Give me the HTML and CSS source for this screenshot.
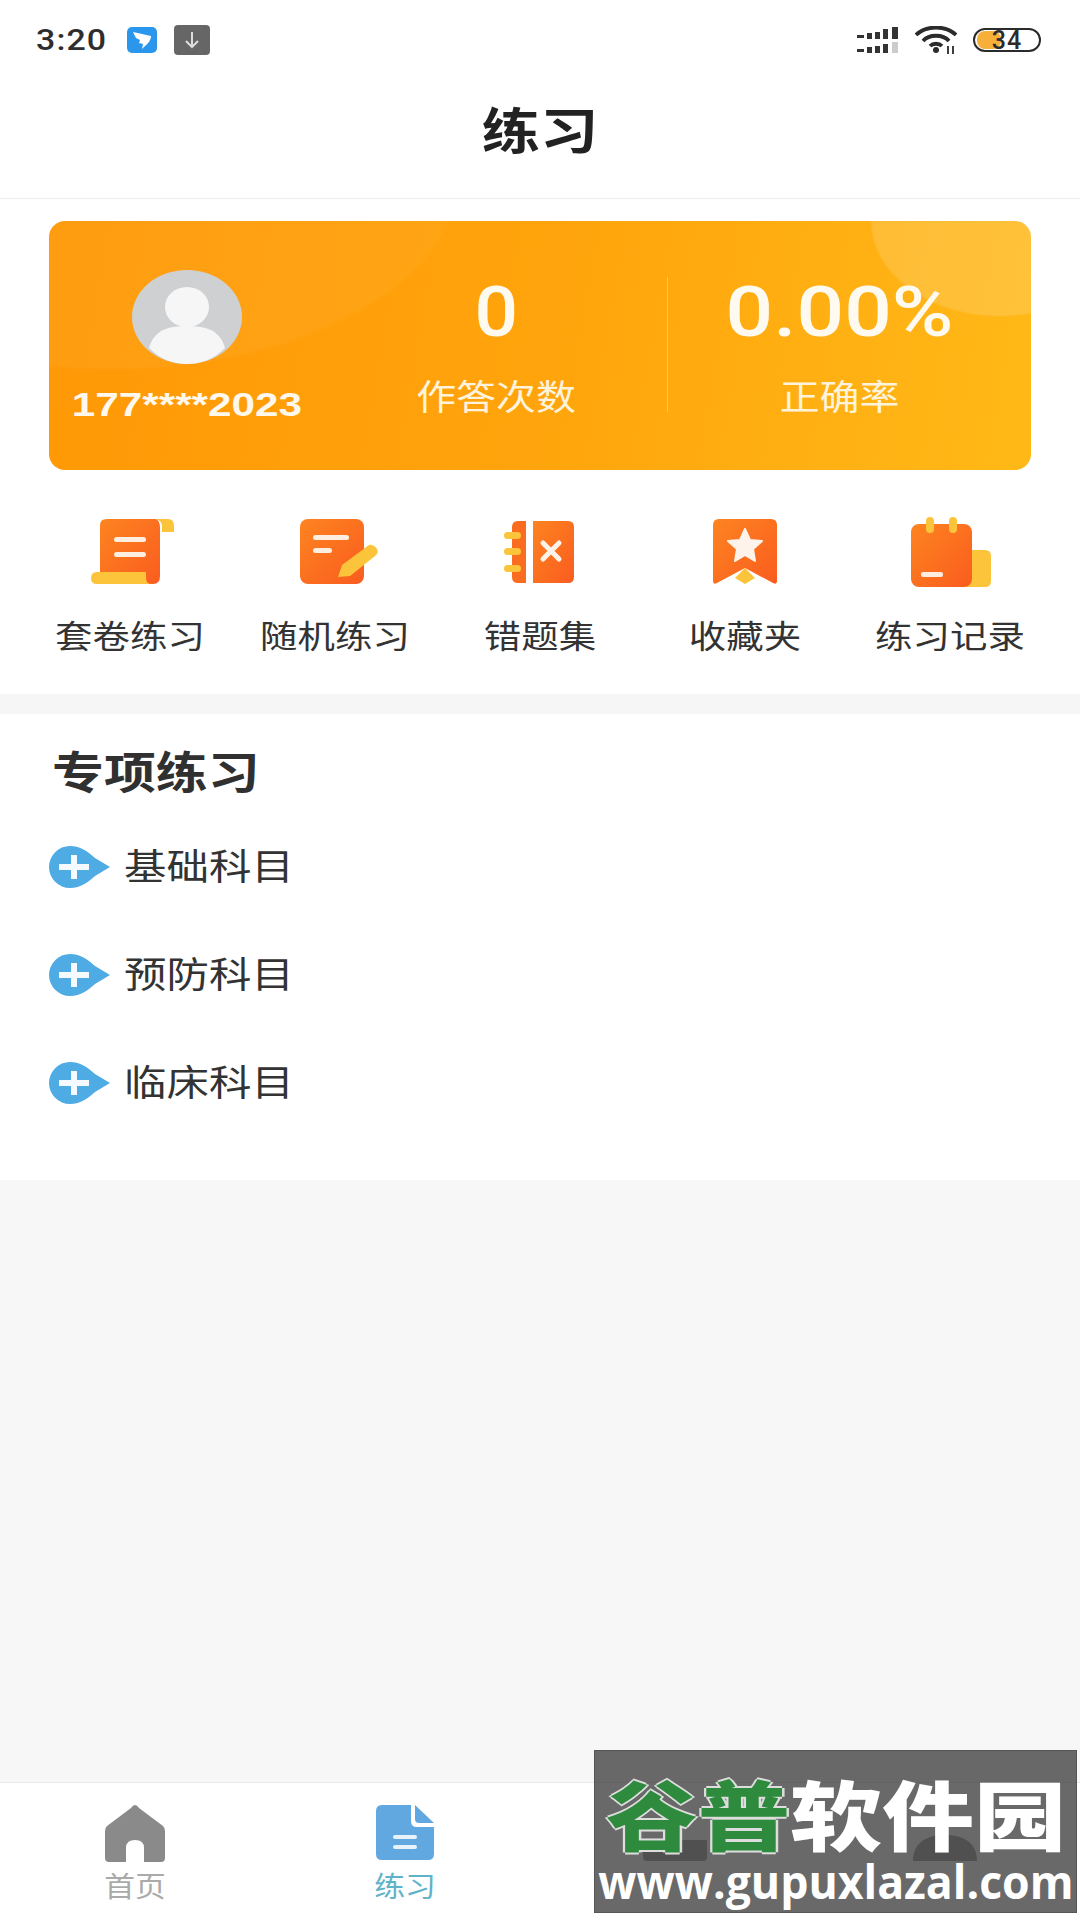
FILE: index.html
```html
<!DOCTYPE html>
<html lang="zh-CN">
<head>
<meta charset="utf-8">
<title>练习</title>
<link rel="stylesheet" href="styles.css">
</head>
<body>
<div class="page">
  <div class="status">
    <div class="status-left">
      <span class="time">3:20</span>
      <svg class="st-blue" width="30" height="26" viewBox="0 0 30 26"><rect width="30" height="26" rx="5" fill="#2a97ec"/><path d="M6 5 L24 9 C24 13 21 17 17 20 L15 22 L16 17 L12 16 L13 13 L9 11 Z" fill="#fff"/></svg>
      <svg class="st-gray" width="36" height="30" viewBox="0 0 36 30"><rect width="36" height="30" rx="4" fill="#666"/><path d="M18 7 V22 M12 16 L18 22 L24 16" stroke="#ddd" stroke-width="2" fill="none"/></svg>
    </div>
    <div class="status-right">
      <svg width="42" height="26" viewBox="0 0 42 26" fill="#333"><rect x="0" y="8" width="7" height="3"/><rect x="10" y="6" width="5" height="6"/><rect x="18" y="5" width="5" height="7"/><rect x="26" y="2" width="5" height="10"/><rect x="35" y="0" width="6" height="12"/><rect x="0" y="22" width="7" height="3"/><rect x="10" y="20" width="5" height="6"/><rect x="18" y="19" width="5" height="7"/><rect x="26" y="17" width="5" height="9"/><rect x="35" y="15" width="6" height="11" fill="#ccc"/></svg>
      <svg width="42" height="28" viewBox="0 0 42 28" fill="none" stroke="#2b2b2b" stroke-width="3.8"><path d="M1 9 C11 -1 31 -1 41 9"/><path d="M8 15 C14 8 28 8 34 15"/><path d="M15 20 C18 17 24 17 27 20"/><circle cx="21" cy="24" r="3" fill="#2b2b2b" stroke="none"/><path d="M33 20 V28 M38 20 V28" stroke-width="1.8"/></svg>
      <div class="battery"><span class="battery-fill"></span><span class="battery-num">34</span></div>
    </div>
  </div>

  <header class="header"><h1 class="title"><span class="wide-title">练习</span></h1></header>

  <section class="top">
    <div class="card">
      <div class="user">
        <svg class="avatar" width="110" height="94" viewBox="0 0 110 94"><ellipse cx="55" cy="47" rx="55" ry="47" fill="#cfd0d1"/><ellipse cx="55" cy="37" rx="22" ry="20" fill="#f6f6f6"/><path d="M17 78 C22 60 36 56 55 56 C74 56 88 60 93 78 C82 89 69 94 55 94 C41 94 28 89 17 78 Z" fill="#f6f6f6"/></svg>
        <div class="phone"><span class="wide-more">177****2023</span></div>
      </div>
      <div class="stat">
        <div class="num"><span class="wide-num">0</span></div>
        <div class="stat-label"><span class="wide">作答次数</span></div>
      </div>
      <div class="stat stat-divided">
        <div class="num"><span class="wide-rate">0.00%</span></div>
        <div class="stat-label"><span class="wide">正确率</span></div>
      </div>
    </div>

    <div class="tools">
      <div class="tool">
        <svg width="100" height="72" viewBox="0 0 100 72"><defs><linearGradient id="g" x1="0" y1="0" x2="1" y2="1"><stop offset="0" stop-color="#fd8420"/><stop offset="1" stop-color="#fa5c1f"/></linearGradient></defs>
          <path d="M76 3 H88 Q94 3 94 10 V16 H82 L82 10 Q82 5 76 3 Z" fill="#fbc43a"/>
          <path d="M27 3 H76 Q80 5 80 12 V60 Q80 68 73 68 H20 V9 Q20 3 27 3 Z" fill="url(#g)"/>
          <path d="M17 56 H66 V62 Q66 68 72 68 H17 Q11 68 11 62 Q11 56 17 56 Z" fill="#fbc43a"/>
          <rect x="34" y="21" width="32" height="5" rx="2.5" fill="#fdeee0"/><rect x="34" y="36" width="32" height="5" rx="2.5" fill="#fdeee0"/></svg>
        <div class="tool-label"><span class="wide-tool">套卷练习</span></div>
      </div>
      <div class="tool">
        <svg width="100" height="72" viewBox="0 0 100 72"><rect x="15" y="3" width="64" height="65" rx="8" fill="url(#g)"/><rect x="28" y="19" width="36" height="5" rx="2.5" fill="#fdeee0"/><rect x="28" y="32" width="19" height="5" rx="2.5" fill="#fdeee0"/><path d="M53 61 L57 49 L84 29 Q88 28 92 33 Q94 37 90 40 L65 60 Z" fill="#fbc43a"/></svg>
        <div class="tool-label"><span class="wide-tool">随机练习</span></div>
      </div>
      <div class="tool">
        <svg width="100" height="72" viewBox="0 0 100 72"><path d="M28 5 H36 V67 H28 Q22 67 22 61 V11 Q22 5 28 5 Z" fill="#fa6c20"/><path d="M43 5 H78 Q84 5 84 11 V61 Q84 67 78 67 H43 Z" fill="url(#g)"/><rect x="14" y="16" width="17" height="7" rx="3.5" fill="#fbc43a"/><rect x="14" y="32" width="17" height="7" rx="3.5" fill="#fbc43a"/><rect x="14" y="49" width="17" height="7" rx="3.5" fill="#fbc43a"/><path d="M53 27 L69 43 M69 27 L53 43" stroke="#fdf3ea" stroke-width="5" stroke-linecap="round"/></svg>
        <div class="tool-label"><span class="wide-tool">错题集</span></div>
      </div>
      <div class="tool">
        <svg width="100" height="72" viewBox="0 0 100 72"><path d="M50 52 L60 62 L50 68 L40 62 Z" fill="#fbc43a"/><path d="M24 3 H76 Q82 3 82 9 V65 Q82 69 78 67 L50 52 L22 67 Q18 69 18 65 V9 Q18 3 24 3 Z" fill="url(#g)"/><path d="M50 13 L55 24 L67 25 L58 33 L60 45 L50 39 L40 45 L42 33 L33 25 L45 24 Z" fill="#fdf3ea" stroke="#fdf3ea" stroke-width="2" stroke-linejoin="round"/></svg>
        <div class="tool-label"><span class="wide-tool">收藏夹</span></div>
      </div>
      <div class="tool">
        <svg width="100" height="72" viewBox="0 0 100 72"><path d="M66 34 H85 Q91 34 91 40 V65 Q91 71 85 71 H66 Z" fill="#fbc43a"/><rect x="11" y="8" width="61" height="63" rx="8" fill="url(#g)"/><rect x="26" y="1" width="8" height="16" rx="4" fill="#fbc43a"/><rect x="49" y="1" width="8" height="16" rx="4" fill="#fbc43a"/><rect x="21" y="56" width="22" height="5" rx="2" fill="#fdeee0"/></svg>
        <div class="tool-label"><span class="wide-tool">练习记录</span></div>
      </div>
    </div>
  </section>

  <div class="band"></div>

  <section class="special">
    <h2 class="special-title"><span class="wide-left">专项练习</span></h2>
    <div class="row">
      <svg width="61" height="42" viewBox="0 0 61 42"><path d="M21 0 C32 0 39 6 46 12 L61 21 L46 30 C39 36 32 42 21 42 A21 21 0 0 1 21 0 Z" fill="#4fabe4"/><path d="M25 9 V33 M10 21 H40" stroke="#f4fafd" stroke-width="6"/></svg>
      <span class="row-label"><span class="wide-left">基础科目</span></span>
    </div>
    <div class="row">
      <svg width="61" height="42" viewBox="0 0 61 42"><path d="M21 0 C32 0 39 6 46 12 L61 21 L46 30 C39 36 32 42 21 42 A21 21 0 0 1 21 0 Z" fill="#4fabe4"/><path d="M25 9 V33 M10 21 H40" stroke="#f4fafd" stroke-width="6"/></svg>
      <span class="row-label"><span class="wide-left">预防科目</span></span>
    </div>
    <div class="row">
      <svg width="61" height="42" viewBox="0 0 61 42"><path d="M21 0 C32 0 39 6 46 12 L61 21 L46 30 C39 36 32 42 21 42 A21 21 0 0 1 21 0 Z" fill="#4fabe4"/><path d="M25 9 V33 M10 21 H40" stroke="#f4fafd" stroke-width="6"/></svg>
      <span class="row-label"><span class="wide-left">临床科目</span></span>
    </div>
  </section>

  <main class="filler"></main>

  <nav class="nav">
    <div class="tab">
      <svg width="62" height="60" viewBox="0 0 62 60"><path d="M31 0 Q33 0 35 3 L59 21 Q61 23 61 26 V53 Q61 57 57 57 H40 V43 Q40 35 31 35 Q22 35 22 43 V57 H5 Q1 57 1 53 V26 Q1 23 3 21 L27 3 Q29 0 31 0 Z" fill="#8a8a8a"/></svg>
      <div class="tab-label"><span class="wide-tab">首页</span></div>
    </div>
    <div class="tab tab-active">
      <svg width="62" height="60" viewBox="0 0 62 60"><path d="M8 0 H37 V16 Q37 22 43 22 H60 V49 Q60 55 54 55 H8 Q2 55 2 49 V6 Q2 0 8 0 Z" fill="#62a8e0"/><path d="M41 0 L60 18 H45 Q41 18 41 14 Z" fill="#62a8e0"/><rect x="19" y="30" width="24" height="4" rx="2" fill="#e8f2fb"/><rect x="19" y="40" width="24" height="4" rx="2" fill="#e8f2fb"/></svg>
      <div class="tab-label"><span class="wide-tab">练习</span></div>
    </div>
    <div class="tab">
      <svg width="66" height="60" viewBox="0 0 66 60"><path d="M1 35 H65 V52 Q65 56 61 56 H5 Q1 56 1 52 Z" fill="#8a8a8a"/></svg>
    </div>
    <div class="tab">
      <svg width="66" height="60" viewBox="0 0 66 60"><path d="M1 56 C1 38 14 30 33 30 C52 30 65 38 65 56 Z" fill="#8a8a8a"/></svg>
    </div>
  </nav>

  <aside class="watermark">
    <div class="wm-brand"><span class="wide-brand"><span class="wm-green">谷普</span>软件园</span></div>
    <div class="wm-url"><span class="wide-url">www.gupuxlazal.com</span></div>
  </aside>
</div>
</body>
</html>
```

FILE: styles.css
```css
* { box-sizing: border-box; }
html, body { margin: 0; padding: 0; }
body {
  width: 1080px;
  height: 1920px;
  overflow: hidden;
  font-family: "Noto Sans CJK SC", "Liberation Sans", sans-serif;
  color: #333;
  background: #f7f7f7;
}
.page {
  position: relative;
  width: 1080px;
  height: 1920px;
  display: flex;
  flex-direction: column;
}
.wide, .wide-num, .wide-rate, .wide-more, .wide-tab, .wide-url, .wide-brand, .wide-tool, .wide-title { display: inline-block; white-space: nowrap; }
.wide { transform: scaleX(1.14); }
.wide-title { transform: scaleX(1.19); }
.wide-tool { transform: scaleX(1.17); }
.wide-left { display: inline-block; white-space: nowrap; transform: scaleX(1.18); transform-origin: left center; }
.wide-num { transform: scaleX(1.08); }
.wide-rate { transform: scaleX(1.18); }
.wide-more { transform: scaleX(1.28); }
.wide-tab { transform: scaleX(1.1); }
.wide-url { transform: scaleX(.97); }
.wide-brand { transform: scaleX(1.21); }

/* status bar */
.status {
  height: 66px;
  background: #fff;
  padding: 14px 39px 0 36px;
  display: flex;
  justify-content: space-between;
  align-items: center;
}
.status-left { display: flex; align-items: center; }
.time {
  display: inline-block;
  width: 72px;
  font: 500 30px/1 Roboto, sans-serif;
  letter-spacing: 1px;
  color: #2e2e2e;
  transform: scaleX(1.13);
  transform-origin: left center;
}
.st-blue { margin-left: 19px; }
.st-gray { margin-left: 17px; }
.status-right { display: flex; align-items: center; gap: 16px; }
.battery {
  position: relative;
  width: 68px;
  height: 24px;
  border: 2.5px solid #2b2b2b;
  border-radius: 12px;
  display: flex;
  align-items: center;
  justify-content: center;
}
.battery-fill {
  position: absolute;
  left: 2px;
  top: 1px;
  bottom: 1px;
  width: 24px;
  border-radius: 8px;
  background: #f6b03a;
}
.battery-num {
  position: relative;
  font: 500 25px/1 Roboto, sans-serif;
  color: #2b2b2b;
  letter-spacing: 1px;
}

/* header */
.header {
  height: 133px;
  background: #fff;
  border-bottom: 1px solid #ececec;
  display: flex;
  align-items: center;
  justify-content: center;
  padding-bottom: 8px;
}
.title {
  margin: 0;
  font-size: 49px;
  line-height: 60px;
  font-weight: 700;
  color: #222;
}

/* top */
.top { background: #fff; padding: 22px 0 40px; }
.card {
  margin: 0 49px;
  height: 249px;
  border-radius: 16px;
  padding-right: 18px;
  display: grid;
  grid-template-columns: 276px 342px 346px;
  color: #fff;
  background:
    radial-gradient(ellipse 130px 96px at 951px 0, rgba(255,255,255,.15) 98%, transparent 100%),
    radial-gradient(ellipse 350px 190px at 60px -40px, rgba(255,255,255,.04) 98%, transparent 100%),
    linear-gradient(100deg, #ff9806 0%, #ffa40c 50%, #ffb917 100%);
}
.user { display: flex; flex-direction: column; align-items: center; padding-top: 49px; }
.phone { margin-top: 21px; font: 700 33px/40px "Liberation Sans", sans-serif; color: #fff8ec; }
.stat { display: flex; flex-direction: column; align-items: center; padding-top: 51px; }
.stat-divided { position: relative; }
.stat-divided::before {
  content: "";
  position: absolute;
  left: 0;
  top: 56px;
  height: 135px;
  width: 1px;
  background: rgba(255,255,255,.3);
}
.num { font: 500 71px/80px Roboto, sans-serif; color: #fffaf0; }
.stat-label { margin-top: 20px; font-size: 35px; line-height: 46px; color: #fff3dc; }

.tools {
  margin-top: 46px;
  padding: 0 27px;
  display: grid;
  grid-template-columns: repeat(5, 1fr);
}
.tool { display: flex; flex-direction: column; align-items: center; }
.tool-label { margin-top: 26px; font-size: 32px; line-height: 40px; color: #333; }

.band { height: 20px; background: #f6f6f6; }

/* special */
.special { background: #fff; height: 466px; padding: 26px 49px 0; }
.special-title { margin: 0 0 13px 3px; font-size: 44px; line-height: 60px; font-weight: 700; color: #303030; }
.row { height: 108px; display: flex; align-items: center; gap: 14px; }
.row-label { font-size: 36px; line-height: 48px; padding-bottom: 7px; color: #333; }

.filler { flex: 1; background: #f7f7f7; }

/* nav */
.nav {
  height: 138px;
  background: #fff;
  border-top: 1px solid #e8e8e8;
  padding-top: 22px;
  display: grid;
  grid-template-columns: repeat(4, 270px);
}
.tab { display: flex; flex-direction: column; align-items: center; }
.tab-label { margin-top: 2px; font-size: 28px; line-height: 36px; color: #aaa; }
.tab-active .tab-label { color: #5fb3c9; }

/* watermark */
.watermark {
  position: absolute;
  left: 594px;
  top: 1750px;
  width: 483px;
  height: 163px;
  background: rgba(65,65,65,.79);
  border: 1px solid #555;
  display: flex;
  flex-direction: column;
  align-items: center;
  overflow: hidden;
}
.wm-brand {
  margin-top: 20px;
  font-size: 76px;
  line-height: 82px;
  font-weight: 900;
  color: #fff;
}
.wm-green {
  color: #2e8b3d;
  text-shadow: 2px 0 0 #ddd, -2px 0 0 #ddd, 0 2px 0 #ddd, 0 -2px 0 #ddd;
}
.wm-url {
  margin-top: 2px;
  font: 700 46px/52px "Open Sans", sans-serif;
  color: #fff;
}
```
